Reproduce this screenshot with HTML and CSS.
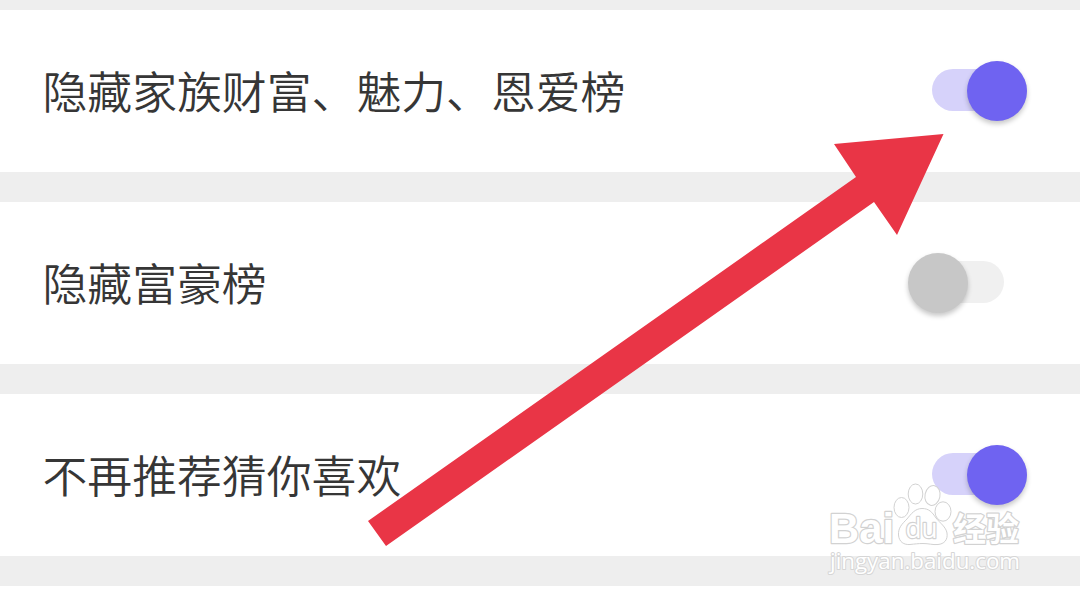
FILE: index.html
```html
<!DOCTYPE html>
<html lang="zh-CN">
<head>
    <meta charset="UTF-8">
    <meta name="viewport" content="width=device-width, initial-scale=1.0">
    <title>隐私设置</title>
    <link rel="stylesheet" href="styles.css">
</head>
<body>
    <ul class="settings">
        <li class="item">
            <span class="label">隐藏家族财富、魅力、恩爱榜</span>
            <span class="switch on"><span class="knob"></span></span>
        </li>
        <li class="item">
            <span class="label">隐藏富豪榜</span>
            <span class="switch"><span class="knob"></span></span>
        </li>
        <li class="item">
            <span class="label">不再推荐猜你喜欢</span>
            <span class="switch on"><span class="knob"></span></span>
        </li>
    </ul>

    <svg class="arrow" viewBox="0 0 1080 599">
        <polygon points="368,521 856,177 834,144 943.500,134 897,235 874,202 386,546"/>
    </svg>

    <svg class="watermark" viewBox="820 475 210 110">
        <g class="logo">
            <text class="brand" x="829" y="543" textLength="65" lengthAdjust="spacingAndGlyphs">Bai</text>
            <ellipse cx="901.5" cy="507.5" rx="7.5" ry="10"/>
            <ellipse cx="915.5" cy="494" rx="7.3" ry="10"/>
            <ellipse cx="932.5" cy="495.5" rx="7.5" ry="10" transform="rotate(12 932.5 495.5)"/>
            <ellipse cx="943" cy="511.5" rx="8" ry="9.7"/>
            <path d="M922 508.500C915 508.500 911 514 907 519C902 524 898 528 898.500 535C899 542 904 545 910 544.500C915 544 918 543.500 923 543.500C929 543.500 932 545 938 544.500C944 544 948 540 947 533C946 527 940 523 936 518C932 512 929 508.500 922 508.500Z"/>
            <text class="du" x="905.5" y="538" textLength="32" lengthAdjust="spacingAndGlyphs">du</text>
            <text class="name" x="953" y="540.5" textLength="66" lengthAdjust="spacingAndGlyphs">经验</text>
        </g>
        <text class="url" x="830" y="569" textLength="190" lengthAdjust="spacingAndGlyphs">jingyan.baidu.com</text>
    </svg>
</body>
</html>
```

FILE: styles.css
```css
body {
    margin: 0;
    background-color: #fff;
    color: #363636;
    font-family: "Noto Sans CJK SC", sans-serif;
    overflow: hidden;
}
.settings {
    margin: 0;
    padding: 0;
    list-style: none;
    border-top: 10px solid #eee;
}
.item {
    display: flex;
    justify-content: space-between;
    align-items: center;
    box-sizing: border-box;
    height: 192px;
    padding: 0 52px 0 42.5px;
    border-bottom: 30px solid #eee;
}
.label {
    margin-bottom: 2px;
    font-size: 44.85px;
    font-weight: 350;
    line-height: 64px;
    white-space: nowrap;
}
.switch {
    display: flex;
    align-items: center;
    width: 72px;
    height: 42px;
    margin-right: 24px;
    margin-bottom: 2px;
    border-radius: 21px;
    background-color: #f0f0f0;
}
.knob {
    flex-shrink: 0;
    width: 60px;
    height: 60px;
    margin-top: 2px;
    margin-left: -24px;
    border-radius: 50%;
    background-color: #c7c7c7;
    box-shadow: 0 3px 5px rgba(0, 0, 0, 0.22);
}
.switch.on {
    justify-content: flex-end;
    margin-right: 1px;
    width: 95px;
    background-color: #d6d2fa;
}
.switch.on .knob {
    margin-left: 0;
    background-color: #6f63f1;
}
.arrow {
    position: absolute;
    top: 0;
    left: 0;
    width: 1080px;
    height: 599px;
    fill: #e93546;
}
.watermark {
    position: absolute;
    top: 475px;
    left: 820px;
    width: 210px;
    height: 110px;
}
.logo {
    fill: rgba(255, 255, 255, 0.6);
    stroke: #d2d2d2;
    stroke-width: 1;
}
.logo text,
.url {
    fill: #fff;
    paint-order: stroke;
    stroke-linejoin: round;
}
.brand {
    font: bold 43px "Liberation Sans", sans-serif;
    stroke-width: 2.5;
}
.du {
    font: 28px "Open Sans", sans-serif;
    stroke-width: 2.5;
}
.name {
    font: 700 33px "Noto Sans CJK SC", sans-serif;
    stroke-width: 2.5;
}
.url {
    font: 22px "Open Sans", sans-serif;
    stroke: #d6d6d6;
    stroke-width: 2;
}
```
